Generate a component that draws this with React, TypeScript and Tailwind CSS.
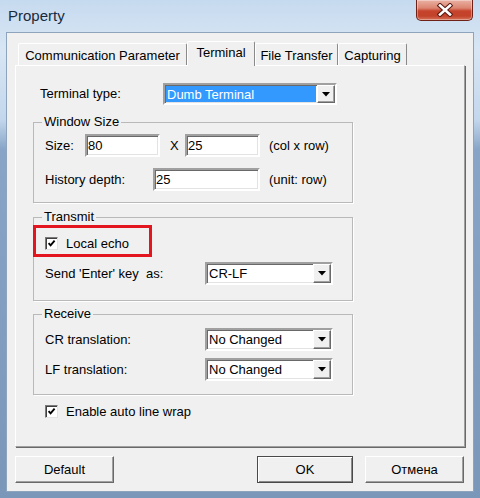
import type { ReactNode } from 'react';

const sunken =
  'bg-white border-2 border-t-[#a0a0a0] border-l-[#a0a0a0] border-r-white border-b-white shadow-[inset_1px_1px_0_#696969,inset_-1px_-1px_0_#e3e3e3]';

const raised =
  'bg-[#f0f0f0] border border-t-white border-l-white border-r-[#696969] border-b-[#696969] shadow-[inset_-1px_-1px_0_#a0a0a0]';

function Checkbox() {
  return (
    <span className="w-[13px] h-[13px] shrink-0 bg-white border border-t-[#7a7a7a] border-l-[#7a7a7a] border-r-[#e3e3e3] border-b-[#e3e3e3] shadow-[inset_1px_1px_0_#404040] flex items-center justify-center">
      <svg width="9" height="9" viewBox="0 0 9 9">
        <path d="M1.6 4.1 L3.6 6.3 L7.6 1.6" fill="none" stroke="#000" strokeWidth="1.9" />
      </svg>
    </span>
  );
}

function Input({ value, w }: { value: string; w: string }) {
  return (
    <div className={`${sunken} ${w} h-[23px] flex items-center pl-[1px] leading-none`}>{value}</div>
  );
}

function Select({ value, w, h = 'h-[23px]', highlight = false }: { value: string; w: string; h?: string; highlight?: boolean }) {
  return (
    <div className={`${sunken} ${w} ${h} flex`}>
      <div className="flex-1 flex p-[1px]">
        <span
          className={`flex-1 flex items-center pl-[1px] leading-none ${
            highlight ? 'bg-[#3399ff] text-white' : ''
          }`}
        >
          {value}
        </span>
      </div>
      <div className={`${raised} w-[18px] flex items-center justify-center`}>
        <svg width="8" height="5" viewBox="0 0 8 5">
          <path d="M0 0 H8 L4 4.5 Z" fill="#000" />
        </svg>
      </div>
    </div>
  );
}

function Group({ title, h, className = '', children }: { title: string; h: string; className?: string; children: ReactNode }) {
  return (
    <div
      className={`relative w-[320px] ${h} border border-[#b9b9b9] shadow-[1px_1px_0_#fff] pl-[11px] flex flex-col ${className}`}
    >
      <span className="absolute -top-[9px] left-[8px] px-[2px] bg-[#f0f0f0] leading-[16px]">{title}</span>
      {children}
    </div>
  );
}

function Tab({ label, w, active = false }: { label: string; w: string; active?: boolean }) {
  return (
    <div
      className={`${w} flex items-center justify-center bg-[#f0f0f0] border-t border-l border-r border-t-white border-l-white border-r-[#8a8a8a] rounded-t-[2px] leading-none ${
        active ? 'h-[25px] -mb-[1px] relative z-10 pb-[3px]' : 'h-[22px] pt-[1px]'
      }`}
    >
      {label}
    </div>
  );
}

export default function App() {
  return (
    <div className="w-[480px] h-[498px] flex flex-col bg-[linear-gradient(180deg,#c6daef_0%,#d8e6f4_10%,#c3d7ec_24%,#88a5c7_30%,#7a97ba_100%)] text-[13px] text-black font-['Liberation_Sans',Arial,sans-serif]">
      {/* Title bar */}
      <div className="h-[32px] shrink-0 flex items-start justify-between">
        <span className="ml-[8px] mt-[7px] text-[15px] leading-[18px] text-[#1a2a3b]">Property</span>
        <div className="mr-[7px] w-[57px] h-[21px] rounded-b-[5px] border border-t-0 border-[#6e2117] bg-[linear-gradient(180deg,#eab1a4_0%,#dc8571_40%,#c6432c_55%,#c2422a_80%,#d7735a_100%)] shadow-[inset_0_0_0_1px_rgba(255,255,255,0.35)] flex items-center justify-center">
          <svg width="18" height="14" viewBox="0 0 18 14">
            <path d="M4 2.5 L14 11.5 M14 2.5 L4 11.5" stroke="#5b1a12" strokeWidth="4.6" strokeLinecap="square" />
            <path d="M4 2.5 L14 11.5 M14 2.5 L4 11.5" stroke="#fff" strokeWidth="2.6" strokeLinecap="square" />
          </svg>
        </div>
      </div>

      {/* Client area */}
      <div className="mx-[6px] h-[460px] bg-[#f0f0f0] border border-[#8ea4bd] flex flex-col">
        {/* Tabs */}
        <div className="flex items-end ml-[11px] mt-[8px]">
          <Tab label="Communication Parameter" w="w-[169px]" />
          <Tab label="Terminal" w="w-[68px]" active />
          <Tab label="File Transfer" w="w-[83px]" />
          <Tab label="Capturing" w="w-[69px]" />
        </div>

        {/* Tab panel */}
        <div className="ml-[8px] w-[450px] h-[382px] border border-t-white border-l-white border-r-[#a0a0a0] border-b-[#a0a0a0] shadow-[1px_1px_0_#696969] pl-[17px] flex flex-col">
          <div className="mt-[17px] pl-[7px] flex items-center h-[22px]">
            <span className="w-[123px]">Terminal type:</span>
            <Select value="Dumb Terminal" w="w-[174px]" h="h-[22px]" highlight />
          </div>

          <Group title="Window Size" h="h-[81px]" className="mt-[17px]">
            <div className="mt-[11px] flex items-center h-[23px]">
              <span className="w-[40px]">Size:</span>
              <Input value="80" w="w-[75px]" />
              <span className="w-[25px] pl-[10px]">X</span>
              <Input value="25" w="w-[75px]" />
              <span className="ml-[9px]">(col x row)</span>
            </div>
            <div className="mt-[11px] flex items-center h-[23px]">
              <span className="w-[108px]">History depth:</span>
              <Input value="25" w="w-[107px]" />
              <span className="ml-[9px]">(unit: row)</span>
            </div>
          </Group>

          <Group title="Transmit" h="h-[84px]" className="mt-[14px]">
            <div className="absolute top-[7px] -left-[1px] w-[119px] h-[32px] border-[3px] border-[#e3151f]" />
            <div className="mt-[18px] flex items-center h-[15px] gap-[8px]">
              <Checkbox />
              <span className="leading-none">Local echo</span>
            </div>
            <div className="mt-[11px] flex items-center h-[23px]">
              <span className="w-[160px]">Send 'Enter' key&nbsp; as:</span>
              <Select value="CR-LF" w="w-[128px]" />
            </div>
          </Group>

          <Group title="Receive" h="h-[81px]" className="mt-[13px]">
            <div className="mt-[13px] flex items-center h-[23px]">
              <span className="w-[160px]">CR translation:</span>
              <Select value="No Changed" w="w-[128px]" />
            </div>
            <div className="mt-[7px] flex items-center h-[23px]">
              <span className="w-[160px]">LF translation:</span>
              <Select value="No Changed" w="w-[128px]" />
            </div>
          </Group>

          <div className="mt-[9px] pl-[12px] flex items-center h-[15px] gap-[8px]">
            <Checkbox />
            <span className="leading-none">Enable auto line wrap</span>
          </div>
        </div>

        {/* Buttons */}
        <div className="mt-[9px] ml-[8px] flex">
          <button className={`${raised} w-[99px] h-[27px] leading-none`}>Default</button>
          <button className="ml-[143px] w-[96px] h-[27px] bg-[#f0f0f0] border border-[#4a4a4a] shadow-[inset_1px_1px_0_#fff,inset_-1px_-1px_0_#8a8a8a] leading-none">
            OK
          </button>
          <button className={`${raised} ml-[12px] w-[99px] h-[27px] leading-none`}>Отмена</button>
        </div>
      </div>
    </div>
  );
}
